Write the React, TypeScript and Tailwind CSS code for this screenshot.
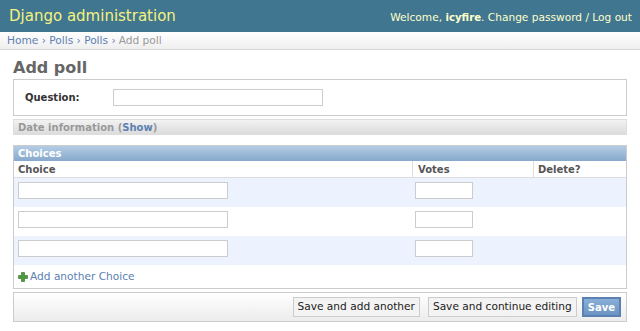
import React from "react";

const font = { fontFamily: '"DejaVu Sans", Verdana, sans-serif' };

function Row({ alt }: { alt: boolean }) {
  return (
    <div className={`flex h-[29px] items-start pt-[4px] ${alt ? "bg-[#edf3fe]" : "bg-white"}`}>
      <div className="w-[398px] pl-[4px]">
        <div className="h-[17px] w-[210px] border border-[#ccc] bg-white" />
      </div>
      <div className="w-[121px] pl-[3px]">
        <div className="h-[17px] w-[58px] border border-[#ccc] bg-white" />
      </div>
      <div className="flex-1" />
    </div>
  );
}

export default function App() {
  return (
    <div className="h-[331px] w-[640px] overflow-hidden bg-white" style={font}>
      <div className="flex h-[32px] items-center justify-between bg-[#417690] pl-[9px] pr-[8px]">
        <div className="text-[15px] leading-none text-[#f4f27f]">Django administration</div>
        <div className="pt-[4px] text-[10.6px] leading-none text-[#ffffcc]">
          Welcome, <b className="text-[10.2px]">icyfire</b>. Change password / Log out
        </div>
      </div>
      <div className="flex h-[18px] items-center border-b border-[#d6d6d6] bg-gradient-to-b from-white to-[#efefef] pl-[7px] text-[10.6px] text-[#5b80b2]">
        Home › Polls › Polls › <span className="ml-[3px] text-[#999]">Add poll</span>
      </div>
      <div className="px-[13px]">
        <h1 className="mt-[8px] h-[20px] text-[16px] font-bold leading-[20px] text-[#666]">Add poll</h1>
        <div className="mt-[1px] flex h-[37px] items-center border border-[#ccc]">
          <div className="w-[99px] pl-[11px] text-[10px] font-bold text-[#333]">Question:</div>
          <div className="h-[17px] w-[210px] border border-[#ccc] bg-white" />
        </div>
        <div className="mt-[3px] flex h-[16px] items-center border border-[#ddd] bg-gradient-to-b from-[#f2f2f2] to-[#dcdcdc] pl-[4px] text-[10px] font-bold text-[#999]">
          Date information (<span className="text-[#5b80b2]">Show</span>)
        </div>
        <div className="mt-[10px] border border-[#ccc]">
          <div className="flex h-[15px] items-center bg-gradient-to-b from-[#b4cde4] to-[#86a8cc] pl-[4px] text-[10px] font-bold text-white">
            Choices
          </div>
          <div className="flex h-[17px] items-center border-b border-[#ddd] text-[10px] font-bold text-[#555]">
            <div className="w-[398px] pl-[4px]">Choice</div>
            <div className="flex h-full w-[121px] items-center border-l border-[#ddd] pl-[5px]">Votes</div>
            <div className="flex h-full flex-1 items-center border-l border-[#ddd] pl-[4px]">Delete?</div>
          </div>
          <Row alt />
          <Row alt={false} />
          <Row alt />
          <div className="flex h-[23px] items-center pl-[4px] text-[10.6px] text-[#5b80b2]">
            <svg width="10" height="10" viewBox="0 0 10 10" className="mr-[2px]">
              <path d="M3.5 0.5h3v3h3v3h-3v3h-3v-3h-3v-3h3z" fill="#4d9a3d" stroke="#2f6f26" strokeWidth="0.6" />
            </svg>
            Add another Choice
          </div>
        </div>
        <div className="mt-[3px] flex h-[30px] items-center justify-end gap-[8px] border border-[#ccc] bg-gradient-to-b from-white to-[#ececec] pr-[5px]">
          <div className="flex h-[20px] items-center border border-[#ccc] bg-[#f3f3f3] px-[4px] text-[10.6px] text-[#222]">
            Save and add another
          </div>
          <div className="flex h-[20px] items-center border border-[#ccc] bg-[#f3f3f3] px-[4px] text-[10.6px] text-[#222]">
            Save and continue editing
          </div>
          <div className="-ml-[3px] flex h-[20px] items-center border-2 border-[#5b80b2] bg-gradient-to-b from-[#8aaed6] to-[#6a94c4] px-[4px] text-[10px] font-bold text-white">
            Save
          </div>
        </div>
      </div>
    </div>
  );
}
